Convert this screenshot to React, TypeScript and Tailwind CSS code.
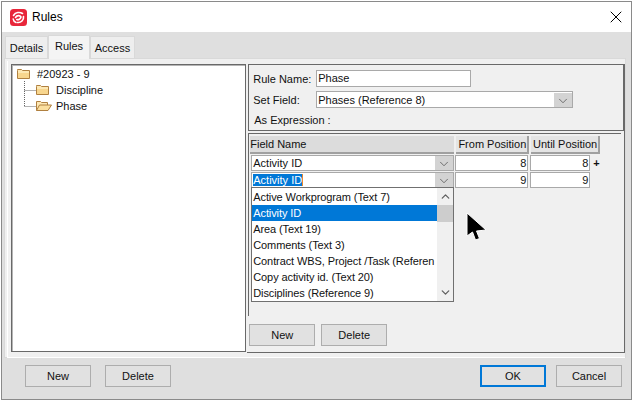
import React from 'react';
import { X, ChevronDown, ChevronUp } from 'lucide-react';

const font = "font-['Liberation_Sans',sans-serif] text-[11px] leading-[14px] text-[#111]";

const FolderClosed = () => (
  <svg width="13" height="12" viewBox="0 0 13 12" className="shrink-0">
    <path d="M0.5 2.5 L0.5 1.5 L4.5 1.5 L5.5 2.5 L12.5 2.5 L12.5 10.5 L0.5 10.5 Z" fill="#fde8b4" stroke="#b08040" />
    <path d="M1 5 H12 V10 H1 Z" fill="#f8d68e" />
  </svg>
);

const FolderOpen = () => (
  <svg width="16" height="12" viewBox="0 0 16 12" className="shrink-0">
    <path d="M0.5 10.5 L0.5 1.5 L4.5 1.5 L5.5 2.5 L11.5 2.5 L11.5 5" fill="#fde8b4" stroke="#b08040" />
    <path d="M0.5 10.5 L3.5 5 L15.5 5 L12 10.5 Z" fill="#fbdf9f" stroke="#b08040" />
  </svg>
);

const DropButton = () => (
  <span className="w-[18px] h-[14px] bg-[#d3d3d3] flex items-center justify-center">
    <ChevronDown size={14} strokeWidth={1.2} className="text-[#444] mt-[2px]" />
  </span>
);

const Combo = ({ text, selected }: { text: string; selected?: boolean }) => (
  <div className="w-[203px] h-[16px] bg-white border border-[#a9a9a9] flex items-center justify-between">
    <span className="pl-[1px]">
      {selected ? <span className="bg-[#0078d7] text-white border-r border-[#e8872c]">{text}</span> : text}
    </span>
    <DropButton />
  </div>
);

const NumBox = ({ value, wide }: { value: string; wide?: boolean }) => (
  <div className={`${wide ? 'w-[73px]' : 'w-[60px]'} h-[16px] bg-white border border-[#a9a9a9] text-right pr-[1px]`}>{value}</div>
);

const Btn = ({ children, primary }: { children: string; primary?: boolean }) => (
  <div
    className={`w-[66px] h-[22px] flex items-center justify-center bg-[#e1e1e1] ${
      primary ? 'border-2 border-[#0078d7]' : 'border border-[#adadad]'
    }`}
  >
    {children}
  </div>
);

const options = [
  'Active Workprogram (Text 7)',
  'Activity ID',
  'Area (Text 19)',
  'Comments (Text 3)',
  'Contract WBS, Project /Task (Referen',
  'Copy activity id. (Text 20)',
  'Disciplines (Reference 9)',
];

export default function App() {
  return (
    <div className={`relative w-[633px] h-[401px] overflow-hidden bg-white pt-[1px] pl-[1px] ${font}`}>
      <div className="w-[631px] h-[399px] border border-[#8a8a8a] flex flex-col bg-[#dfdfdf]">
        {/* Title bar */}
        <div className="h-[30px] shrink-0 bg-white flex items-center pl-[8px] pr-[5px]">
          <svg width="17" height="17" viewBox="0 0 17 17" className="shrink-0">
            <rect width="17" height="17" rx="3.5" fill="#e8263a" />
            <g fill="none" stroke="#fff" strokeWidth="1.6" strokeLinecap="round">
              <path d="M3.5 6.5 C5.5 3 10 2.8 12.5 4.5" />
              <path d="M13.5 7.5 C14 11 11 14 7.5 13.5" />
              <path d="M3.2 10 C3.5 12 4.5 13 6 13.5" />
              <path d="M5.5 8.5 C7 6 10 6.2 11 8 C10.5 10 8.5 11 6.8 10.5" />
            </g>
          </svg>
          <span className="ml-[5px] text-[12px] text-black">Rules</span>
          <X size={20} strokeWidth={1.2} className="ml-auto text-black" />
        </div>

        {/* Tabs */}
        <div className="flex items-end h-[26px] shrink-0 pl-[3px]">
          <div className="w-[43px] h-[22px] bg-[#eeeeee] border border-[#d9d9d9] border-b-0 flex items-center justify-center">Details</div>
          <div className="w-[42px] h-[24px] -mb-[1px] pb-[3px] relative bg-[#f4f4f4] border border-[#d9d9d9] border-b-0 flex items-center justify-center">Rules</div>
          <div className="w-[45px] h-[22px] bg-[#eeeeee] border border-[#d9d9d9] border-b-0 flex items-center justify-center">Access</div>
        </div>

        {/* Tab page */}
        <div className="ml-[2px] w-[622px] h-[300px] shrink-0 bg-[#f0f0f0] border border-[#d9d9d9] pl-[2px] pt-[2px]">
          <div className="h-[297px] border-l border-b border-white flex pl-[3px] pt-[3px]">
            {/* Tree */}
            <div className="relative w-[236px] h-[288px] bg-white border border-[#696969] shadow-[inset_1px_1px_0_#b5b5b5] pl-[5px] pt-[1px] flex flex-col">
              <svg width="16" height="34" className="absolute left-[12px] top-[16px]">
                <path d="M0.5 0 V25.5 M0.5 9.5 H12 M0.5 25.5 H12" stroke="#666" strokeDasharray="1 1" fill="none" />
              </svg>
              <div className="h-[16px] flex items-center">
                <FolderClosed />
                <span className="ml-[7px]">#20923 - 9</span>
              </div>
              <div className="h-[16px] flex items-center pl-[19px]">
                <FolderClosed />
                <span className="ml-[7px]">Discipline</span>
              </div>
              <div className="h-[16px] flex items-center pl-[19px]">
                <FolderOpen />
                <span className="ml-[4px]">Phase</span>
              </div>
            </div>

            {/* Right side */}
            <div className="ml-[1px] w-[379px] h-[289px] border-r border-b border-[#696969] flex flex-col">
              <div className="ml-[1px] h-[67px] border border-[#696969] shrink-0 pl-[4px] pt-[5px] flex flex-col gap-[4px]">
                <div className="flex items-center h-[17px]">
                  <span className="w-[63px]">Rule Name:</span>
                  <div className="w-[155px] h-[17px] bg-white border border-[#a9a9a9] pl-[1px]">Phase</div>
                </div>
                <div className="flex items-center h-[17px]">
                  <span className="w-[63px]">Set Field:</span>
                  <div className="w-[257px] h-[17px] bg-white border border-[#a9a9a9] flex justify-between items-center">
                    <span className="pl-[1px]">Phases (Reference 8)</span>
                    <DropButton />
                  </div>
                </div>
                <div className="h-[14px] pl-[1px] mt-[1px]">As Expression :</div>
              </div>

              {/* Field grid */}
              <div className="relative ml-[1px] mt-[2px] w-[373px] h-[183px] border-t border-l border-[#696969] border-r-white border-b-white shrink-0 pt-[2px] pl-[1px]">
                <div className="flex h-[18px] gap-[2px]">
                  <div className="w-[204px] bg-[#dcdcdc] border-b-2 border-[#a0a0a0] leading-[16px]">Field Name</div>
                  <div className="w-[73px] bg-[#e4e4e4] border-r-2 border-b-2 border-[#a0a0a0] text-right pr-[1px] leading-[16px]">From Position</div>
                  <div className="w-[69px] bg-[#e4e4e4] border-r-2 border-b-2 border-[#a0a0a0] text-right pr-[1px] leading-[16px]">Until Position</div>
                </div>
                <div className="pl-[1px] mt-[1px] flex items-center">
                  <Combo text="Activity ID" />
                  <div className="ml-[1px]"><NumBox value="8" wide /></div>
                  <div className="ml-[2px]"><NumBox value="8" /></div>
                  <span className="ml-[3px] font-bold">+</span>
                </div>
                <div className="pl-[1px] mt-[1px] flex items-center">
                  <Combo text="Activity ID" selected />
                  <div className="ml-[1px]"><NumBox value="9" wide /></div>
                  <div className="ml-[2px]"><NumBox value="9" /></div>
                </div>

                {/* Open dropdown */}
                <div className="absolute left-[2px] top-[53px] w-[203px] h-[115px] bg-white border border-[#707070] flex">
                  <div className="w-[185px] pt-[1px] tracking-[-0.1px]">
                    {options.map((o, i) => (
                      <div
                        key={o}
                        className={`h-[16px] pl-[1px] whitespace-nowrap overflow-hidden leading-[16px] ${
                          i === 1 ? 'bg-[#0078d7] text-white' : ''
                        }`}
                      >
                        {o}
                      </div>
                    ))}
                  </div>
                  <div className="flex-1 flex flex-col items-center bg-[#f0f0f0]">
                    <ChevronUp size={13} strokeWidth={2.4} className="text-[#606060] mt-[2px]" />
                    <div className="w-full h-[17px] bg-[#cdcdcd] mt-[2px]" />
                    <ChevronDown size={13} strokeWidth={2.4} className="text-[#606060] mt-auto mb-[2px]" />
                  </div>
                </div>
              </div>

              <div className="flex gap-[6px] mt-[8px] pl-[2px]">
                <Btn>New</Btn>
                <Btn>Delete</Btn>
              </div>
            </div>
          </div>
        </div>

        {/* Footer */}
        <div className="flex items-center pl-[23px] pr-[9px] pt-[7px]">
          <Btn>New</Btn>
          <div className="ml-[14px]">
            <Btn>Delete</Btn>
          </div>
          <div className="ml-auto flex gap-[10px]">
            <Btn primary>OK</Btn>
            <Btn>Cancel</Btn>
          </div>
        </div>
      </div>

      {/* Mouse cursor */}
      <svg width="22" height="30" viewBox="0 0 22 30" className="absolute left-[466px] top-[212px]">
        <path d="M1 1 L1 24 L6.5 20 L9.5 28 L13.5 26.5 L10.5 19 L20 18 Z" fill="#000" stroke="#fff" strokeWidth="1" />
      </svg>
    </div>
  );
}
